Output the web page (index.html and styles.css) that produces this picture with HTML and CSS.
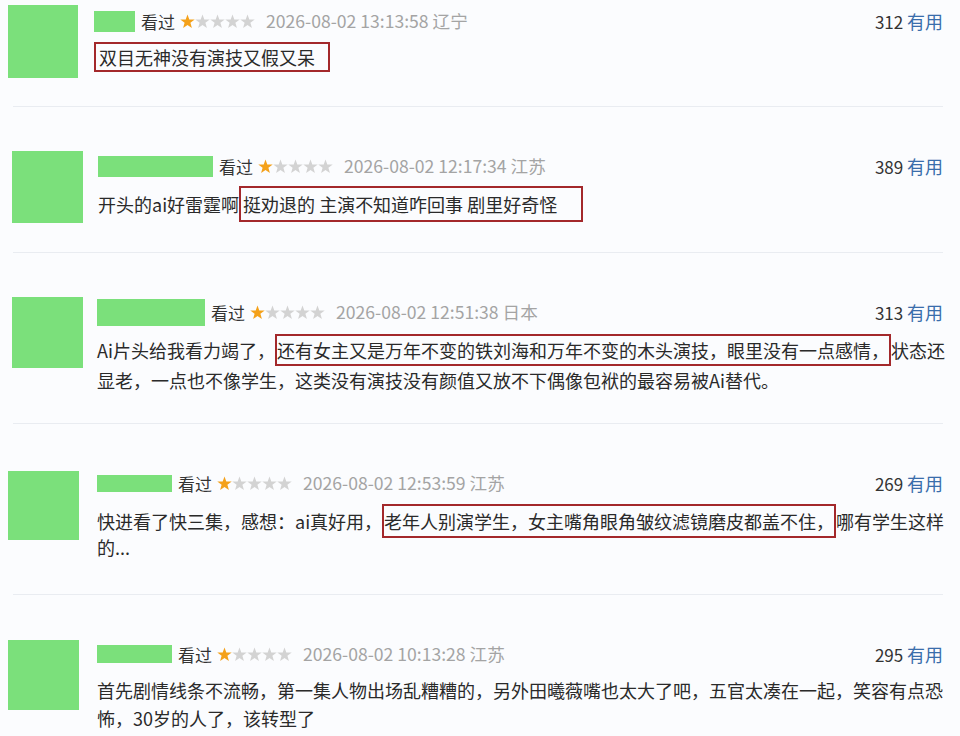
FILE: index.html
```html
<!DOCTYPE html>
<html lang="zh-CN">
<head>
<meta charset="utf-8">
<title>短评</title>
<link rel="stylesheet" href="styles.css">
</head>
<body>
<svg class="sprite" aria-hidden="true">
  <defs>
    <symbol id="star" viewBox="0 0 15 15">
      <polygon points="7.5,0.4 9.3,5.4 14.7,5.5 10.4,8.8 11.9,14.1 7.5,11 3.1,14.1 4.6,8.8 0.3,5.5 5.7,5.4"/>
    </symbol>
  </defs>
</svg>
<main class="reviews">
  <article class="review review--1">
    <div class="avatar"></div>
    <div class="body">
      <div class="meta">
        <span class="user"></span>
        <span class="status">看过</span>
        <svg class="stars" viewBox="0 0 75 15"><use href="#star" class="on" x="0" width="15" height="15"/><use href="#star" x="15" width="15" height="15"/><use href="#star" x="30" width="15" height="15"/><use href="#star" x="45" width="15" height="15"/><use href="#star" x="60" width="15" height="15"/></svg>
        <span class="time">2026-08-02 13:13:58 辽宁</span>
        <span class="votes"><span class="count">312</span> <span class="useful">有用</span></span>
      </div>
      <p class="comment"><span class="mark">双目无神没有演技又假又呆</span></p>
    </div>
  </article>
  <hr class="divider">
  <article class="review review--2">
    <div class="avatar"></div>
    <div class="body">
      <div class="meta">
        <span class="user"></span>
        <span class="status">看过</span>
        <svg class="stars" viewBox="0 0 75 15"><use href="#star" class="on" x="0" width="15" height="15"/><use href="#star" x="15" width="15" height="15"/><use href="#star" x="30" width="15" height="15"/><use href="#star" x="45" width="15" height="15"/><use href="#star" x="60" width="15" height="15"/></svg>
        <span class="time">2026-08-02 12:17:34 江苏</span>
        <span class="votes"><span class="count">389</span> <span class="useful">有用</span></span>
      </div>
      <p class="comment">开头的ai好雷霆啊<span class="mark">挺劝退的 主演不知道咋回事 剧里好奇怪</span></p>
    </div>
  </article>
  <hr class="divider">
  <article class="review review--3">
    <div class="avatar"></div>
    <div class="body">
      <div class="meta">
        <span class="user"></span>
        <span class="status">看过</span>
        <svg class="stars" viewBox="0 0 75 15"><use href="#star" class="on" x="0" width="15" height="15"/><use href="#star" x="15" width="15" height="15"/><use href="#star" x="30" width="15" height="15"/><use href="#star" x="45" width="15" height="15"/><use href="#star" x="60" width="15" height="15"/></svg>
        <span class="time">2026-08-02 12:51:38 日本</span>
        <span class="votes"><span class="count">313</span> <span class="useful">有用</span></span>
      </div>
      <p class="comment">Ai片头给我看力竭了，<span class="mark">还有女主又是万年不变的铁刘海和万年不变的木头演技，眼里没有一点感情，</span>状态还显老，一点也不像学生，这类没有演技没有颜值又放不下偶像包袱的最容易被Ai替代。</p>
    </div>
  </article>
  <hr class="divider">
  <article class="review review--4">
    <div class="avatar"></div>
    <div class="body">
      <div class="meta">
        <span class="user"></span>
        <span class="status">看过</span>
        <svg class="stars" viewBox="0 0 75 15"><use href="#star" class="on" x="0" width="15" height="15"/><use href="#star" x="15" width="15" height="15"/><use href="#star" x="30" width="15" height="15"/><use href="#star" x="45" width="15" height="15"/><use href="#star" x="60" width="15" height="15"/></svg>
        <span class="time">2026-08-02 12:53:59 江苏</span>
        <span class="votes"><span class="count">269</span> <span class="useful">有用</span></span>
      </div>
      <p class="comment">快进看了快三集，感想：ai真好用，<span class="mark">老年人别演学生，女主嘴角眼角皱纹滤镜磨皮都盖不住，</span>哪有学生这样的...</p>
    </div>
  </article>
  <hr class="divider">
  <article class="review review--5">
    <div class="avatar"></div>
    <div class="body">
      <div class="meta">
        <span class="user"></span>
        <span class="status">看过</span>
        <svg class="stars" viewBox="0 0 75 15"><use href="#star" class="on" x="0" width="15" height="15"/><use href="#star" x="15" width="15" height="15"/><use href="#star" x="30" width="15" height="15"/><use href="#star" x="45" width="15" height="15"/><use href="#star" x="60" width="15" height="15"/></svg>
        <span class="time">2026-08-02 10:13:28 江苏</span>
        <span class="votes"><span class="count">295</span> <span class="useful">有用</span></span>
      </div>
      <p class="comment">首先剧情线条不流畅，第一集人物出场乱糟糟的，另外田曦薇嘴也太大了吧，五官太凑在一起，笑容有点恐怖，30岁的人了，该转型了</p>
    </div>
  </article>
</main>
</body>
</html>
```
FILE: styles.css
```css
html, body {
  margin: 0;
  padding: 0;
}
body {
  background: #fbfcfe;
  font-family: "Noto Sans CJK SC", "Noto Sans", sans-serif;
  color: #2e2e2e;
}
.sprite {
  position: absolute;
  width: 0;
  height: 0;
  overflow: hidden;
}
.reviews {
  display: flex;
  flex-direction: column;
  width: 960px;
  height: 736px;
  overflow: hidden;
}
.review {
  display: flex;
  align-items: flex-start;
  box-sizing: border-box;
  flex: none;
  height: var(--h);
  padding: var(--pt) 17px 0 var(--pl);
}
.avatar {
  flex: none;
  width: var(--aw);
  height: var(--ah);
  background: #7be07b;
}
.body {
  flex: 1;
  min-width: 0;
  margin-left: var(--gap);
  padding-top: var(--bt);
}
.meta {
  display: flex;
  align-items: center;
  height: var(--mh);
  font-size: 17px;
  line-height: 1;
  white-space: nowrap;
}
.user {
  flex: none;
  width: var(--uw);
  height: var(--uh);
  background: #7be07b;
}
.status {
  margin-left: 6px;
  color: #333;
}
.stars {
  flex: none;
  margin-left: 5px;
  width: 75px;
  height: 15px;
  fill: #d3d3d3;
}
.stars .on {
  fill: #f4a11a;
}
.time {
  margin-left: 11px;
  font-size: 17.6px;
  color: #a4a4a4;
}
.votes {
  margin-left: auto;
  color: #333;
}
.useful {
  color: #3a6dab;
  font-size: 18px;
}
.comment {
  margin: var(--ct) 0 0;
  width: var(--cw);
  font-size: 18px;
  line-height: var(--lh);
  color: #2a2a2a;
}
.mark {
  border: 2px solid #a3282b;
  padding: var(--mpv) var(--mpr) var(--mpv) var(--mpl);
}
.divider {
  flex: none;
  border: 0;
  height: 1px;
  background: #e9ecf1;
  margin: 0 17px 0 13px;
}

.review--1 {
  --h: 106px; --pt: 5px; --pl: 8px; --aw: 70px; --ah: 73px; --gap: 16px;
  --bt: 5px; --mh: 22px; --uw: 41px; --uh: 21px;
  --ct: 11px; --lh: 28px; --cw: 846px;
  --mpv: 0px; --mpl: 3px; --mpr: 13px;
}
.review--2 {
  --h: 145px; --pt: 44px; --pl: 12px; --aw: 71px; --ah: 72px; --gap: 15px;
  --bt: 4px; --mh: 22px; --uw: 115px; --uh: 21px;
  --ct: 13px; --lh: 28px; --cw: 846px;
  --mpv: 3px; --mpl: 2px; --mpr: 24px;
}
.review--3 {
  --h: 170px; --pt: 44px; --pl: 12px; --aw: 71px; --ah: 71px; --gap: 14px;
  --bt: 1px; --mh: 28px; --uw: 108px; --uh: 27px;
  --ct: 9px; --lh: 30px; --cw: 858px;
  --mpv: 1px; --mpl: 0px; --mpr: 0px;
}
.review--4 {
  --h: 170px; --pt: 47px; --pl: 8px; --aw: 71px; --ah: 69px; --gap: 18px;
  --bt: 1px; --mh: 22px; --uw: 75px; --uh: 17px;
  --ct: 14px; --lh: 26px; --cw: 856px;
  --mpv: 2px; --mpl: 0px; --mpr: 0px;
}
.review--5 {
  --h: 141px; --pt: 45px; --pl: 8px; --aw: 71px; --ah: 70px; --gap: 18px;
  --bt: 3px; --mh: 22px; --uw: 75px; --uh: 18px;
  --ct: 11px; --lh: 28px; --cw: 848px;
  --mpv: 0px; --mpl: 0px; --mpr: 0px;
}
```
